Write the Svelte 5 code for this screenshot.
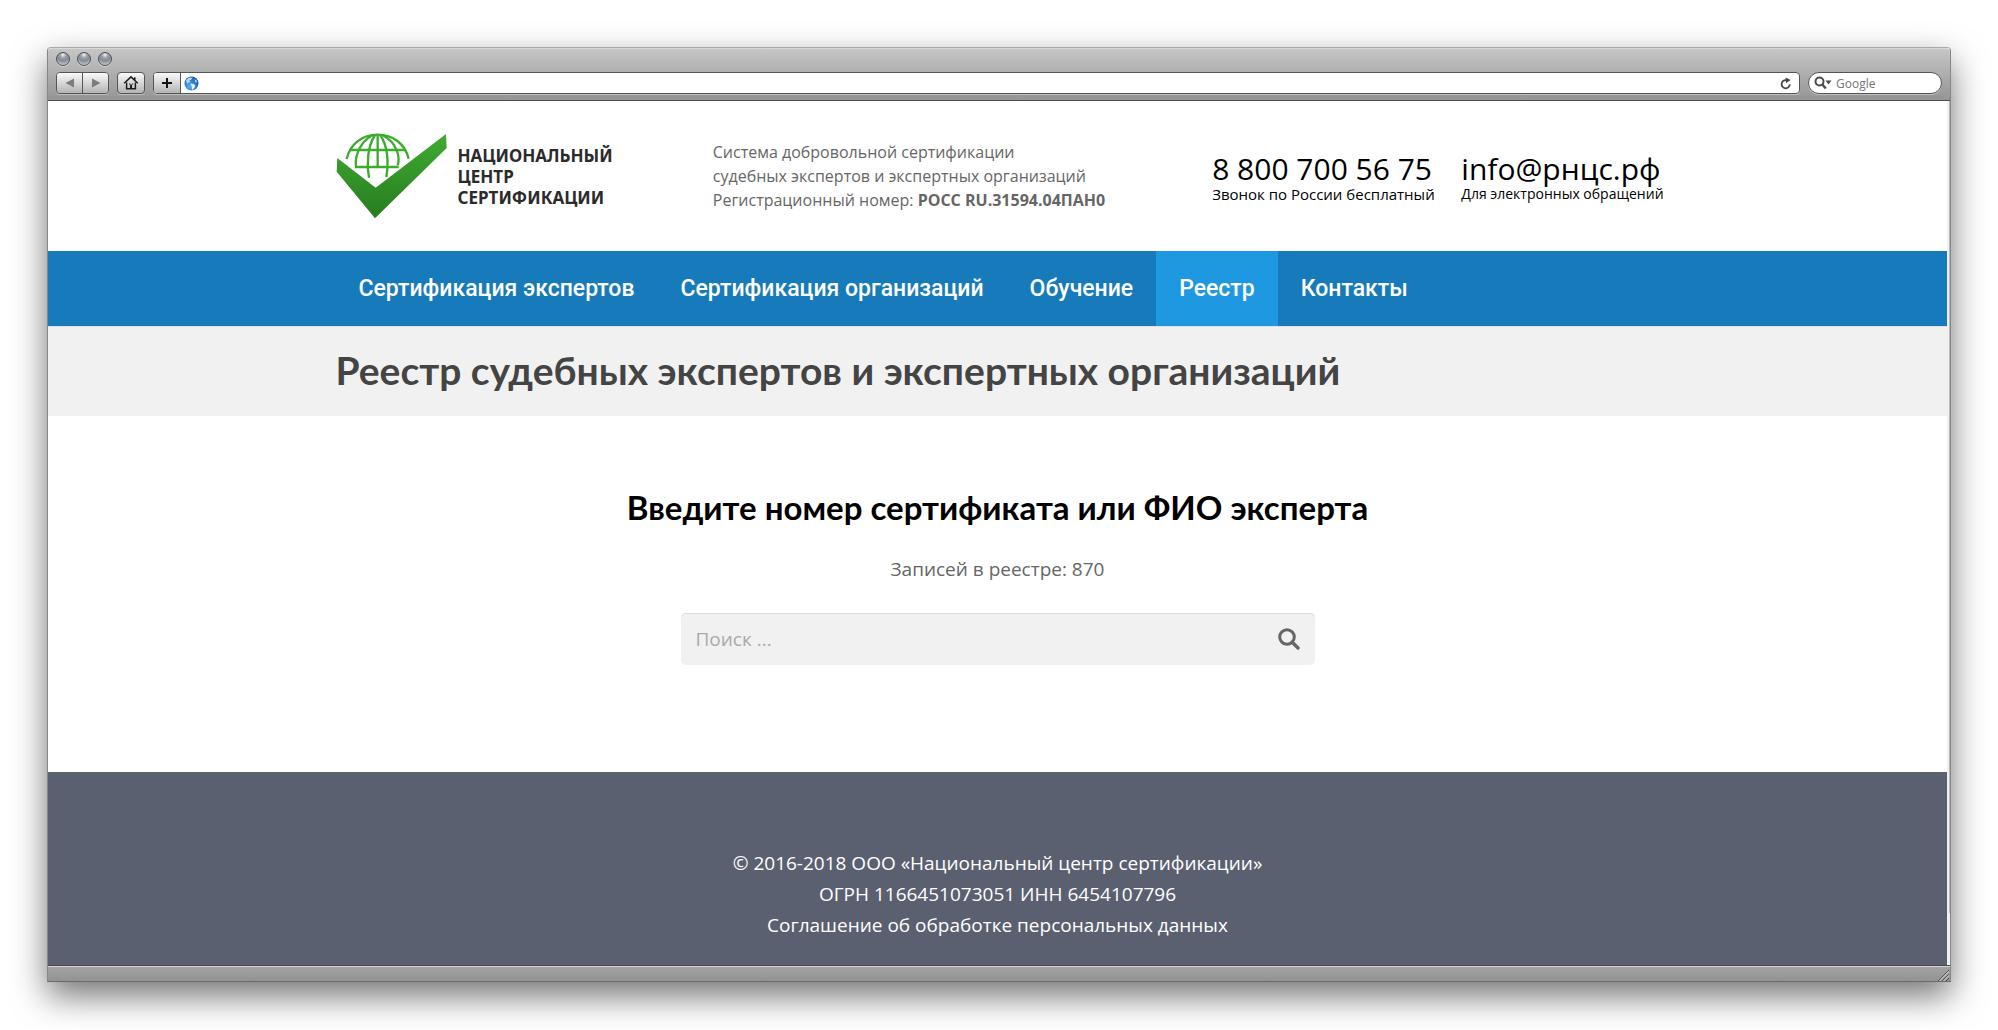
<script lang="ts">
	interface NavItem {
		label: string;
		href: string;
	}

	const nav: NavItem[] = [
		{ label: 'Сертификация экспертов', href: '#experts' },
		{ label: 'Сертификация организаций', href: '#organizations' },
		{ label: 'Обучение', href: '#education' },
		{ label: 'Реестр', href: '#registry' },
		{ label: 'Контакты', href: '#contacts' }
	];

	let active = $state('#registry');
	let address = $state('');
	let query = $state('');

	const total = 870;
</script>

<div class="desktop">
	<div class="window">
		<div class="chrome">
			<div class="lights">
				<span class="light"></span>
				<span class="light"></span>
				<span class="light"></span>
			</div>
			<div class="toolbar">
				<div class="history">
					<button class="tool" aria-label="Назад">
						<svg width="10" height="10" viewBox="0 0 10 10"><path d="M9 0.5v9L0.5 5z" fill="#7d7d7d" /></svg>
					</button>
					<button class="tool" aria-label="Вперёд">
						<svg width="10" height="10" viewBox="0 0 10 10"><path d="M1 0.5v9L9.5 5z" fill="#7d7d7d" /></svg>
					</button>
				</div>
				<button class="tool home" aria-label="Домой">
					<svg width="16" height="16" viewBox="0 0 16 16" fill="none" stroke="#1c1c1c" stroke-width="1.5">
						<path d="M1.2 8.3 8 1.9l6.8 6.4M11.8 5V2.2" />
						<path d="M3.6 7.6v6.2h8.8V7.6" />
						<path d="M8 13.5v-4" stroke-width="2" />
						<path d="M6 9h1.2M9 9h1.2" stroke-width="1" />
					</svg>
				</button>
				<div class="address">
					<button class="tool" aria-label="Добавить закладку">
						<svg width="12" height="12" viewBox="0 0 12 12"><path d="M6 1v10M1 6h10" stroke="#111" stroke-width="2" /></svg>
					</button>
					<svg class="globe" width="15" height="15" viewBox="0 0 15 15">
						<defs>
							<radialGradient id="earth" cx="0.4" cy="0.7" r="0.75">
								<stop offset="0" stop-color="#59b4f5" />
								<stop offset="0.6" stop-color="#2a78cf" />
								<stop offset="1" stop-color="#164b9a" />
							</radialGradient>
						</defs>
						<circle cx="7.5" cy="7.5" r="7" fill="url(#earth)" />
						<path d="M2 4.2 4.8 1.8 8.5 1.4 7.4 3.5 5.4 4.5 6.6 6.2 4.4 6.4 3 8z" fill="#b5d8f4" />
						<path d="M6.4 7.4l3.8 0.8 1.2 1.8-2.2 3.6-1.2-0.2-0.3-3z" fill="#eaf6ff" />
						<path d="M10.5 3l2 1.5 0.8 2.2-2-0.8z" fill="#b9dcf7" />
					</svg>
					<input type="text" aria-label="Адрес" bind:value={address} />
					<button class="reload" aria-label="Обновить">
						<svg width="12" height="13" viewBox="0 0 12 13">
							<path d="M9.8 7.2A4.1 4.1 0 1 1 6.6 3.2" fill="none" stroke="#484848" stroke-width="1.8" />
							<path d="M5.6 0.4 10.6 3 6 6.2z" fill="#484848" />
						</svg>
					</button>
				</div>
				<label class="google">
					<svg width="18" height="14" viewBox="0 0 18 14">
						<circle cx="5.5" cy="5.5" r="4" fill="none" stroke="#4b4b4b" stroke-width="2" />
						<path d="M8.3 8.5l3.5 4" stroke="#4b4b4b" stroke-width="2.4" />
						<path d="M11.5 4.5h6l-3 4z" fill="#4b4b4b" />
					</svg>
					<input type="text" placeholder="Google" aria-label="Google" />
				</label>
			</div>
		</div>

		<div class="viewport">
			<div class="site">
				<header class="container site-header">
					<a class="logo" href="#home">
						<svg width="111" height="86" viewBox="46 40 333 258">
							<defs>
								<linearGradient id="leaf" x1="0" y1="0" x2="0" y2="1">
									<stop offset="0" stop-color="#3fac31" />
									<stop offset="0.45" stop-color="#35962a" />
									<stop offset="1" stop-color="#277b1f" />
								</linearGradient>
							</defs>
							<g fill="none" stroke="#3cab2e" stroke-width="7">
								<path d="M78 118C88 72 126 45 171 45s82 27 93 72" />
								<path d="M91 91h161" />
								<path d="M104 142h130" />
								<path d="M171 45v97" />
								<path d="M155 47c-43 24-54 72-48 98" />
								<path d="M163 46c-22 34-26 86-18 128" />
								<path d="M187 47c43 24 52 66 44 90" />
								<path d="M179 46c22 34 26 76 18 126" />
							</g>
							<path d="M50 115 165 204 376 43 378 85 163 296 48 156z" fill="url(#leaf)" />
						</svg>
						<span>Национальный<br />центр<br />сертификации</span>
					</a>
					<p class="about">
						Система добровольной сертификации<br />
						судебных экспертов и экспертных организаций<br />
						Регистрационный номер: <b>РОСС RU.31594.04ПАН0</b>
					</p>
					<div class="contact">
						<a href="tel:88007005675">8 800 700 56 75</a>
						<span>Звонок по России бесплатный</span>
					</div>
					<div class="contact mail">
						<a href="mailto:info@рнцс.рф">info@рнцс.рф</a>
						<span>Для электронных обращений</span>
					</div>
				</header>

				<nav class="menu">
					<ul class="container">
						{#each nav as item (item.href)}
							<li>
								<a href={item.href} class:active={active === item.href} onclick={() => (active = item.href)}>
									{item.label}
								</a>
							</li>
						{/each}
					</ul>
				</nav>

				<div class="page-title">
					<div class="container">
						<h1>Реестр судебных экспертов и экспертных организаций</h1>
					</div>
				</div>

				<main>
					<h2>Введите номер сертификата или ФИО эксперта</h2>
					<p class="total">Записей в реестре: {total}</p>
					<form class="search" onsubmit={(e) => e.preventDefault()}>
						<input type="text" placeholder="Поиск ..." aria-label="Поиск" bind:value={query} />
						<button aria-label="Найти">
							<svg width="22" height="22" viewBox="0 0 22 22" fill="none" stroke="#666">
								<circle cx="9" cy="9" r="7.3" stroke-width="3" />
								<path d="M14.3 14.3l5.7 5.7" stroke-width="3.4" stroke-linecap="round" />
							</svg>
						</button>
					</form>
				</main>

				<footer>
					<p>© 2016-2018 ООО «Национальный центр сертификации»</p>
					<p>ОГРН 1166451073051 ИНН 6454107796</p>
					<p><a href="#agreement">Соглашение об обработке персональных данных</a></p>
				</footer>
			</div>
			<div class="scrollbar"><div class="thumb"></div></div>
		</div>

		<div class="statusbar">
			<svg width="12" height="12" viewBox="0 0 12 12" fill="none">
				<path d="M1 12 12 1M5 12l7-7M9 12l3-3" stroke="#555" />
				<path d="M2 12.5 12.5 2M6 12.5l6.5-6.5" stroke="#d5d5d5" />
			</svg>
		</div>
	</div>
</div>

<style>
	:global(body) {
		background: #fff;
	}

	.desktop {
		padding: 47px;
		font-family: 'Open Sans', 'Noto Sans', sans-serif;
		color: #666;
	}

	.desktop :global(*) {
		box-sizing: border-box;
	}

	.window {
		border: 1px solid #868686;
		border-top-color: #a9a9a9;
		border-bottom-color: #6b6b6b;
		border-radius: 4px 4px 0 0;
		box-shadow: 0 14px 34px rgba(0, 0, 0, 0.55);
	}

	p,
	h1,
	h2,
	ul {
		margin: 0;
		padding: 0;
	}

	a {
		color: inherit;
		text-decoration: none;
	}

	button {
		display: flex;
		align-items: center;
		justify-content: center;
		padding: 0;
		border: none;
		background: none;
		cursor: pointer;
	}

	input {
		flex: 1;
		min-width: 0;
		padding: 0;
		border: none;
		outline: none;
		background: none;
		font-family: inherit;
	}

	/* browser frame */
	.chrome {
		padding: 3px 8px 6px;
		border-top: 1px solid #d9d9d9;
		border-bottom: 1px solid #4f4f4f;
		border-radius: 3px 3px 0 0;
		background: linear-gradient(#c6c6c6, #959595);
	}

	.lights {
		display: flex;
		gap: 7px;
		margin-bottom: 6px;
	}

	.light {
		width: 14px;
		height: 14px;
		border: 1px solid #4c505a;
		border-radius: 50%;
		background: radial-gradient(circle at 50% 15%, #f4f5f7 0, #a0a4ab 25%, #858a93 50%, #dcdfe3 100%);
		box-shadow: 0 1px 0 rgba(255, 255, 255, 0.4);
	}

	.toolbar {
		display: flex;
		gap: 8px;
	}

	.history,
	.address,
	.home,
	.google {
		height: 22px;
		border: 1px solid #555;
		border-radius: 4px;
		overflow: hidden;
		box-shadow: 0 1px 0 rgba(255, 255, 255, 0.35);
	}

	.history,
	.address,
	.google {
		display: flex;
		align-items: center;
	}

	.tool {
		width: 25px;
		height: 20px;
		background: linear-gradient(#fafafa, #b4b4b4);
	}

	.tool + .tool {
		width: 26px;
		border-left: 1px solid #555;
	}

	.home {
		width: 28px;
		height: 22px;
	}

	.address {
		flex: 1;
		background: #fff;
	}

	.address .tool {
		width: 27px;
		border-right: 1px solid #555;
	}

	.globe {
		margin: 0 3px;
	}

	.reload {
		width: 26px;
	}

	.google {
		width: 134px;
		padding: 0 5px;
		border-radius: 11px;
		background: #fff;
		gap: 4px;
	}

	.google input {
		font-size: 12px;
	}

	.google input::placeholder {
		color: #757575;
		opacity: 1;
	}

	.viewport {
		display: flex;
		background: #fff;
	}

	.site {
		flex: 1;
		min-width: 0;
	}

	.scrollbar {
		width: 3px;
		background: #f0f0f0;
	}

	.thumb {
		width: 1px;
		height: 94%;
		margin-left: auto;
		background: #bcbcbc;
	}

	.statusbar {
		display: flex;
		justify-content: flex-end;
		padding: 3px 1px 0;
		border-top: 1px solid #4a4a4a;
		box-shadow: inset 0 1px 0 #d2d2d2;
		background: linear-gradient(#a3a3a3, #939393);
	}

	/* site */
	.container {
		max-width: 1324px;
		margin: 0 auto;
	}

	.site-header {
		display: grid;
		grid-template-columns: 377fr 499fr 249fr minmax(0, 198fr);
		align-items: center;
		padding: 32px 0;
	}

	.logo {
		display: flex;
		align-items: center;
		gap: 11px;
		color: #2b2b2b;
		font-family: 'Noto Sans', sans-serif;
		font-size: 17px;
		font-weight: 700;
		line-height: 21px;
		text-transform: uppercase;
	}

	.about {
		font-size: 16px;
		line-height: 24px;
		white-space: nowrap;
	}

	.contact {
		display: flex;
		flex-direction: column;
		padding-top: 4px;
		color: #000;
		white-space: nowrap;
	}

	.contact a {
		font-size: 30px;
		line-height: 32px;
	}

	.contact span {
		font-size: 15px;
		line-height: 18px;
	}

	.mail span {
		font-size: 14px;
	}

	.menu {
		background: #177bbb;
	}

	.menu ul {
		display: flex;
		list-style: none;
	}

	.menu a {
		display: block;
		padding: 0 23px;
		color: #fff;
		font-family: Roboto, sans-serif;
		font-size: 23px;
		font-weight: 500;
		line-height: 75px;
	}

	.menu a.active {
		background: #1e98e0;
	}

	.page-title {
		padding: 19px 0 21px;
		border-top: 1px solid #e2e2e2;
		background: #f1f1f1;
	}

	h1,
	h2 {
		font-family: Lato, 'Open Sans', sans-serif;
		font-weight: 700;
	}

	h1 {
		color: #444;
		font-size: 39px;
		line-height: 49px;
	}

	main {
		display: flex;
		flex-direction: column;
		align-items: center;
		padding: 68px 0 107px;
	}

	h2 {
		color: #000;
		font-size: 33px;
		line-height: 46px;
	}

	.total {
		margin: 24px 0 28px;
		font-size: 19px;
		line-height: 31px;
	}

	.search {
		display: flex;
		align-items: center;
		width: 634px;
		height: 52px;
		padding: 0 15px;
		border-radius: 5px;
		background: #f1f1f1;
		box-shadow: inset 0 1px 0 #dcdcdc;
	}

	.search input {
		font-size: 19px;
		color: #666;
	}

	.search input::placeholder {
		color: #aaa;
		opacity: 1;
	}

	footer {
		padding: 76px 0 24px;
		background: #5b6071;
		color: #fff;
		font-size: 19px;
		line-height: 31px;
		text-align: center;
	}
</style>
